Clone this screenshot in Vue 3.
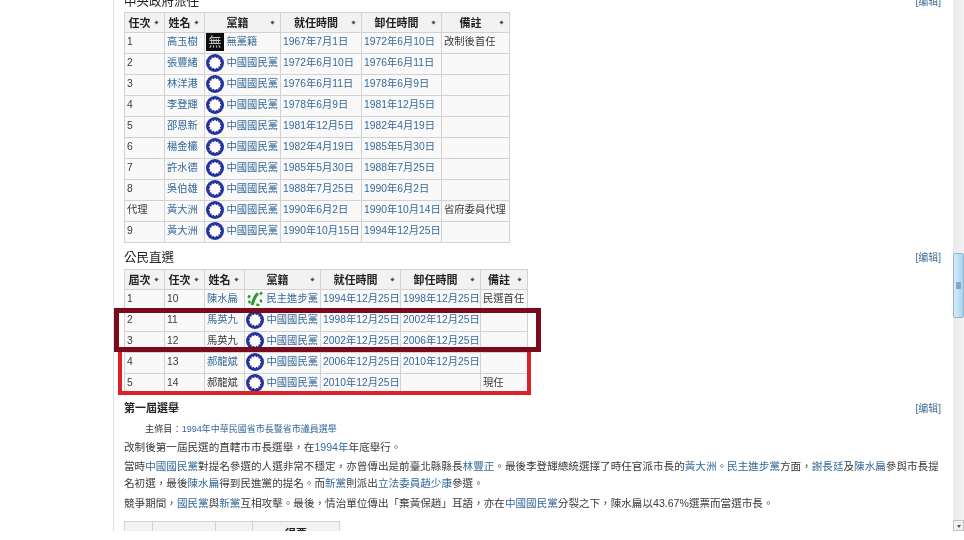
<script setup>
const star = (() => {
  const pts = []
  for (let i = 0; i < 24; i++) {
    const r = i % 2 ? 4.9 : 6.5
    const a = (Math.PI * i) / 12
    pts.push(`${(9 + r * Math.sin(a)).toFixed(2)},${(9 - r * Math.cos(a)).toFixed(2)}`)
  }
  return pts.join(' ')
})()

const K = { type: 'kmt', name: '中國國民黨' }
const firstRows = [
  ['1', '高玉樹', { type: 'none', name: '無黨籍' }, '1967年7月1日', '1972年6月10日', '改制後首任'],
  ['2', '張豐緒', K, '1972年6月10日', '1976年6月11日', ''],
  ['3', '林洋港', K, '1976年6月11日', '1978年6月9日', ''],
  ['4', '李登輝', K, '1978年6月9日', '1981年12月5日', ''],
  ['5', '邵恩新', K, '1981年12月5日', '1982年4月19日', ''],
  ['6', '楊金欉', K, '1982年4月19日', '1985年5月30日', ''],
  ['7', '許水德', K, '1985年5月30日', '1988年7月25日', ''],
  ['8', '吳伯雄', K, '1988年7月25日', '1990年6月2日', ''],
  ['代理', '黃大洲', K, '1990年6月2日', '1990年10月14日', '省府委員代理'],
  ['9', '黃大洲', K, '1990年10月15日', '1994年12月25日', '']
]
const secondRows = [
  ['1', '10', '陳水扁', { type: 'dpp', name: '民主進步黨' }, '1994年12月25日', '1998年12月25日', '民選首任', true],
  ['2', '11', '馬英九', K, '1998年12月25日', '2002年12月25日', '', true],
  ['3', '12', '馬英九', K, '2002年12月25日', '2006年12月25日', '', false],
  ['4', '13', '郝龍斌', K, '2006年12月25日', '2010年12月25日', '', true],
  ['5', '14', '郝龍斌', K, '2010年12月25日', '', '現任', false]
]
const firstHead = [['任次', 40], ['姓名', 40], ['黨籍', 76], ['就任時間', 81], ['卸任時間', 80], ['備註', 68]]
const secondHead = [['屆次', 40], ['任次', 40], ['姓名', 40], ['黨籍', 76], ['就任時間', 80], ['卸任時間', 80], ['備註', 47]]
const lastCols = [28, 63, 37, 87]
</script>

<template>
  <div class="page">
    <div class="viewport">
      <div class="rail"></div>
      <main class="content">
        <div class="head head-top"><h3>中央政府派任</h3><a class="edit">[编辑]</a></div>
        <table class="wiki t1">
          <colgroup><col v-for="h in firstHead" :key="h[0]" :style="{ width: h[1] + 'px' }" /></colgroup>
          <thead><tr><th v-for="h in firstHead" :key="h[0]">{{ h[0] }}<i class="sort"></i></th></tr></thead>
          <tbody>
            <tr v-for="(r, i) in firstRows" :key="i">
              <td>{{ r[0] }}</td>
              <td><a>{{ r[1] }}</a></td>
              <td>
                <div class="party">
                  <span v-if="r[2].type === 'none'" class="flag">無</span>
                  <svg v-else class="emblem" viewBox="0 0 18 18"><circle cx="9" cy="9" r="9" fill="#24309c" /><polygon :points="star" fill="#fff" /></svg>
                  <a>{{ r[2].name }}</a>
                </div>
              </td>
              <td><a>{{ r[3] }}</a></td>
              <td><a>{{ r[4] }}</a></td>
              <td>{{ r[5] }}</td>
            </tr>
          </tbody>
        </table>

        <div class="head head-second"><h3>公民直選</h3><a class="edit">[编辑]</a></div>
        <table class="wiki t2">
          <colgroup><col v-for="h in secondHead" :key="h[0]" :style="{ width: h[1] + 'px' }" /></colgroup>
          <thead><tr><th v-for="h in secondHead" :key="h[0]">{{ h[0] }}<i class="sort"></i></th></tr></thead>
          <tbody>
            <tr v-for="(r, i) in secondRows" :key="i">
              <td>{{ r[0] }}</td>
              <td>{{ r[1] }}</td>
              <td><a v-if="r[7]">{{ r[2] }}</a><template v-else>{{ r[2] }}</template></td>
              <td>
                <div class="party">
                  <svg v-if="r[3].type === 'dpp'" class="emblem" viewBox="0 0 18 18">
                    <g fill="none" stroke="#2c9a2c" stroke-width="3">
                      <path d="M12 3.5C8.4 6 7.6 10.5 6 15" />
                      <path d="M2 6l2.2 1.2M2.4 12.5l2-1M14.2 2.5l1.6 1.8M16 10.5l-2 .8M11.4 16l.8-2.2" />
                    </g>
                  </svg>
                  <svg v-else class="emblem" viewBox="0 0 18 18"><circle cx="9" cy="9" r="9" fill="#24309c" /><polygon :points="star" fill="#fff" /></svg>
                  <a>{{ r[3].name }}</a>
                </div>
              </td>
              <td><a>{{ r[4] }}</a></td>
              <td><a>{{ r[5] }}</a></td>
              <td>{{ r[6] }}</td>
            </tr>
          </tbody>
        </table>

        <div class="head head-third"><h4>第一屆選舉</h4><a class="edit">[编辑]</a></div>
        <div class="hatnote">主條目：<a>1994年中華民國省市長暨省市議員選舉</a></div>
        <p class="p1">改制後第一屆民選的直轄市市長選舉，在<a>1994年</a>年底舉行。</p>
        <p class="p2">當時<a>中國國民黨</a>對提名參選的人選非常不穩定，亦曾傳出是前臺北縣縣長<a>林豐正</a>。最後李登輝總統選擇了時任官派市長的<a>黃大洲</a>。<a>民主進步黨</a>方面，<a>謝長廷</a>及<a>陳水扁</a>參與市長提<br />名初選，最後<a>陳水扁</a>得到民進黨的提名。而<a>新黨</a>則派出<a>立法委員</a><a>趙少康</a>參選。</p>
        <p class="p3">競爭期間，<a>國民黨</a>與<a>新黨</a>互相攻擊。最後，情治單位傳出「棄黃保趙」耳語，亦在<a>中國國民黨</a>分裂之下，陳水扁以43.67%選票而當選市長。</p>
        <table class="wiki last">
          <colgroup><col v-for="(w, i) in lastCols" :key="i" :style="{ width: w + 'px' }" /></colgroup>
          <thead><tr><th></th><th></th><th></th><th class="votes">得票</th></tr></thead>
        </table>
      </main>
      <aside class="scrollbar">
        <div class="thumb"><span class="grip"></span></div>
        <div class="arrow"></div>
      </aside>
    </div>
    <div class="mark mark-red"></div>
    <div class="mark mark-dark"></div>
  </div>
</template>

<style>
body { margin: 0; background: #fff; }
</style>

<style scoped>
.page {
  position: relative;
  width: 964px;
  height: 540px;
  overflow: hidden;
  background: #fff;
  color: #3a3a3a;
  font-family: "Liberation Sans", "Noto Sans CJK TC", sans-serif;
  font-size: 10.3px;
  filter: blur(0.55px);
}
.viewport { display: flex; height: 531px; overflow: hidden; }
.rail { width: 113px; flex: none; }
.content {
  flex: 1;
  min-width: 0;
  border-left: 1px solid #d5e3ee;
  padding: 0 12px 0 10px;
}
a { color: #35699a; }
.head { display: flex; justify-content: space-between; align-items: center; }
.head-top { height: 24px; margin-top: -12px; }
.head-second { height: 26px; }
.head-third { height: 24px; }
h3, h4 { margin: 0; color: #222; font-size: 12.5px; font-weight: 400; }
h4 { font-weight: 700; font-size: 11px; }
.edit { font-size: 10px; color: #3d6c92; }
.wiki {
  border-collapse: collapse;
  table-layout: fixed;
  background: #f9f9f9;
  line-height: 14px;
}
.t1 { width: 385px; }
.t2 { width: 403px; }
.last { width: 215px; }
th, td { border: 1px solid #d2d2d2; overflow: hidden; white-space: nowrap; }
th {
  position: relative;
  height: 19px;
  padding: 0 12px 0 2px;
  background: #f2f2f2;
  color: #222;
  font-size: 11px;
  font-weight: 700;
  text-align: center;
}
td { height: 21px; padding: 0 0 3px 2px; box-sizing: border-box; }
.sort {
  position: absolute;
  right: 6px;
  top: 8px;
  width: 3px;
  height: 3px;
  background: #555;
  transform: rotate(45deg);
}
.party { display: flex; align-items: center; gap: 2.5px; height: 16px; margin-left: -1px; }
.emblem { width: 18px; height: 18px; flex: none; }
.flag {
  width: 18px;
  height: 18px;
  flex: none;
  background: #0c0c0c;
  color: #c8c8c8;
  font-size: 13px;
  line-height: 18px;
  text-align: center;
}
.hatnote { margin: 3px 0 0 21px; font-size: 9.2px; line-height: 14px; }
.hatnote a { font-size: 9px; }
p { margin: 0; font-size: 10.58px; line-height: 17px; }
.p1 { margin-top: 3px; }
.p2 { margin-top: 2px; }
.p3 { margin-top: 3px; }
.last { margin-top: 8.5px; }
.last th { height: 24px; padding: 0; background: #f2f2f2; }
.last .votes { padding-top: 5px; vertical-align: top; }
.scrollbar {
  width: 11px;
  flex: none;
  display: flex;
  flex-direction: column;
  background: linear-gradient(90deg, #e9e9e9, #f3f3f3);
}
.thumb {
  display: flex;
  align-items: center;
  justify-content: center;
  height: 65px;
  margin-top: 253px;
  box-sizing: border-box;
  border: 1px solid #8fb4cc;
  border-radius: 2px;
  background: linear-gradient(90deg, #d5ecf9, #a9d4ee);
}
.grip { width: 5px; height: 7px; background: #7fa9c4; }
.arrow {
  margin-top: auto;
  height: 11px;
  box-sizing: border-box;
  border: 1px solid #c4c4c4;
  background: #f1f1f1;
  position: relative;
}
.arrow::after {
  content: "";
  position: absolute;
  left: 2.5px;
  top: 3.5px;
  border: 2.5px solid transparent;
  border-top: 3px solid #555;
}
.mark { position: absolute; box-sizing: border-box; pointer-events: none; }
.mark-dark {
  left: 114px;
  top: 308px;
  width: 427px;
  height: 44px;
  border: 5px solid #7a0a1c;
}
.mark-red {
  left: 118px;
  top: 348px;
  width: 413px;
  height: 47px;
  border: 4.5px solid #de2128;
}
</style>
